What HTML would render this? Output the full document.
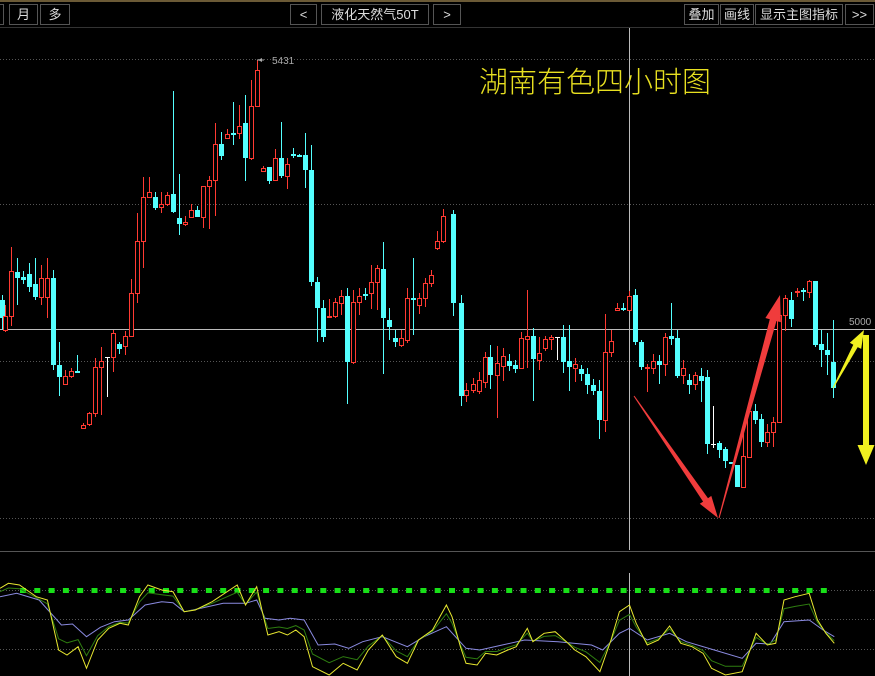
<!DOCTYPE html>
<html><head><meta charset="utf-8"><style>
html,body{margin:0;padding:0;background:#000;width:875px;height:676px;overflow:hidden}
.b{position:absolute;top:4px;height:19px;border:1px solid #555;color:#ddd;font:13px "Liberation Sans","Noto Sans CJK SC",sans-serif;line-height:19px;text-align:center;box-sizing:content-box}
</style></head><body>
<div style="position:absolute;left:0;top:0;width:875px;height:2px;background:#6b5a36"></div>
<div style="position:absolute;left:0;top:27px;width:875px;height:1px;background:#333"></div>
<div class="b" style="left:-2px;width:4px"></div>
<div class="b" style="left:9px;width:27px">月</div>
<div class="b" style="left:40px;width:28px">多</div>
<div class="b" style="left:290px;width:25px">&lt;</div>
<div class="b" style="left:321px;width:106px">液化天然气50T</div>
<div class="b" style="left:433px;width:26px">&gt;</div>
<div class="b" style="left:684px;width:33px">叠加</div>
<div class="b" style="left:720px;width:32px">画线</div>
<div class="b" style="left:755px;width:86px">显示主图指标</div>
<div class="b" style="left:845px;width:27px">&gt;&gt;</div>
<svg id="s" width="875" height="676" style="position:absolute;left:0;top:0">
<g stroke="#555" stroke-dasharray="1,2" stroke-width="1">
<line x1="0" y1="59.5" x2="875" y2="59.5"/><line x1="0" y1="204.5" x2="875" y2="204.5"/>
<line x1="0" y1="361.5" x2="875" y2="361.5"/><line x1="0" y1="518.5" x2="875" y2="518.5"/>
<line x1="0" y1="590.5" x2="875" y2="590.5"/><line x1="0" y1="619.5" x2="875" y2="619.5"/>
<line x1="0" y1="649.5" x2="875" y2="649.5"/>
</g>
<line x1="0" y1="551.5" x2="875" y2="551.5" stroke="#555"/>
<line x1="0" y1="329.5" x2="875" y2="329.5" stroke="#bbb"/>
<line x1="629.5" y1="28" x2="629.5" y2="550" stroke="#bbb"/>
<line x1="629.5" y1="573" x2="629.5" y2="676" stroke="#bbb"/>
<g id="c"></g>
<g id="ind"></g>
<polyline points="257,60 264,60" stroke="#aaa" fill="none"/><polygon points="258,60 262,58 262,62" fill="#aaa"/>
<text x="272" y="64" fill="#aaa" font-family="Liberation Sans" font-size="10">5431</text>
<text x="849" y="325" fill="#aaa" font-family="Liberation Sans" font-size="10">5000</text>
<text x="479" y="92" fill="#e8e020" font-family="Noto Sans CJK SC,sans-serif" font-size="29" font-weight="300">湖南有色四小时图</text>
<g id="arr"></g>
</svg>
<script>
var d=[[2,'c',300,318,295,330],[5,'r',316,330,305,332],[11,'r',271,316,247,326],[17,'c',272,278,258,305],[23,'c',277,280,271,284],[29,'c',274,287,263,292],[35,'c',284,297,258,300],[41,'r',278,297,265,305],[47,'r',278,297,258,318],[53,'c',278,365,270,370],[59,'c',365,377,342,396],[65,'r',376,384,370,384],[71,'r',371,376,368,378],[77,'c',371,373,355,373],[83,'r',425,428,423,429],[89,'r',413,424,412,426],[95,'r',367,413,358,417],[101,'r',361,367,347,415],[107,'w',357,358,357,397],[113,'r',333,357,330,372],[119,'c',344,349,342,354],[125,'r',336,346,331,355],[131,'r',293,336,279,337],[137,'r',241,293,213,303],[143,'r',197,241,177,268],[149,'r',192,197,177,192],[155,'c',197,208,192,210],[161,'r',204,207,192,213],[167,'r',195,204,192,206],[173,'c',194,212,91,213],[179,'c',218,224,174,235],[185,'r',222,224,216,226],[191,'r',210,217,204,217],[197,'c',210,217,206,217],[203,'r',186,217,186,228],[209,'r',180,186,176,229],[215,'r',144,180,123,216],[221,'c',144,156,132,160],[227,'r',134,138,129,138],[233,'c',133,134,102,145],[239,'r',126,133,105,139],[245,'c',123,158,95,181],[251,'r',106,158,80,160],[257,'r',70,106,60,106],[263,'r',168,171,166,172],[269,'c',167,181,168,184],[275,'r',158,180,149,181],[281,'c',158,176,122,178],[287,'r',164,176,158,189],[293,'c',154,155,148,158],[299,'c',155,156,154,157],[305,'c',155,170,133,188],[311,'c',170,282,145,286],[317,'c',282,308,277,342],[323,'c',308,337,300,342],[329,'r',316,317,299,318],[335,'r',302,316,298,318],[341,'r',296,303,290,315],[347,'c',296,362,288,404],[353,'r',302,362,290,364],[359,'r',296,302,288,315],[365,'c',294,296,288,300],[371,'r',282,293,265,309],[377,'r',268,282,265,310],[383,'c',269,318,242,374],[389,'c',320,327,308,340],[395,'c',338,342,330,347],[401,'r',338,345,330,347],[407,'r',298,340,288,343],[413,'c',298,300,258,335],[419,'r',298,305,293,314],[425,'r',283,298,278,307],[431,'r',275,283,270,287],[437,'r',241,248,231,250],[443,'r',216,241,209,243],[453,'c',214,303,210,316],[461,'c',303,396,295,406],[466,'r',390,395,383,402],[473,'r',384,390,378,393],[479,'r',380,391,372,394],[485,'r',357,382,352,388],[490,'c',357,375,345,389],[497,'r',363,375,346,418],[503,'r',356,366,348,381],[509,'c',361,366,354,371],[515,'c',365,369,360,373],[521,'r',338,368,332,369],[527,'r',336,339,290,368],[533,'c',336,359,328,401],[539,'r',353,360,337,370],[545,'r',339,348,336,351],[551,'r',337,339,335,350],[557,'w',337,338,337,360],[563,'c',337,362,325,373],[569,'c',361,367,325,391],[575,'r',364,368,358,382],[581,'c',369,374,365,381],[587,'c',374,385,368,394],[593,'c',385,391,379,395],[599,'c',391,420,380,439],[605,'r',352,420,314,432],[611,'r',341,352,330,357],[617,'r',308,310,303,311],[623,'c',308,310,303,311],[629,'r',296,310,291,311],[635,'c',295,342,289,345],[641,'c',342,367,340,370],[647,'r',367,368,364,392],[653,'r',361,368,354,374],[659,'c',361,365,355,384],[665,'r',337,364,333,376],[671,'c',336,339,303,345],[677,'c',338,376,330,378],[683,'r',368,375,360,384],[689,'c',380,385,374,394],[695,'r',375,384,372,390],[701,'c',376,381,368,402],[707,'c',377,444,370,454],[713,'w',444,445,406,448],[719,'c',443,450,441,458],[725,'c',449,461,447,468],[731,'c',462,464,462,464],[737,'c',465,487,465,487],[743,'r',456,487,430,487],[749,'r',411,457,405,457],[755,'c',411,420,404,424],[761,'c',419,442,414,447],[767,'r',432,442,424,447],[773,'r',422,432,417,447],[779,'r',315,422,299,422],[785,'r',298,315,295,331],[791,'c',300,319,292,327],[797,'r',291,292,288,297],[803,'c',290,292,288,301],[809,'r',281,292,280,298],[815,'c',281,345,281,347],[821,'c',344,350,330,367],[827,'c',350,355,333,375],[833,'c',362,388,320,398]];
var h='';
d.forEach(function(a){var x=a[0],t=a[1],o=a[2],c=a[3],hi=a[4],lo=a[5];
var col=t=='c'?'#54ffff':t=='r'?'#ff3a32':'#fff';
h+='<line x1="'+(x+.5)+'" y1="'+hi+'" x2="'+(x+.5)+'" y2="'+lo+'" stroke="'+col+'"/>';
if(t=='c')h+='<rect x="'+(x-2)+'" y="'+o+'" width="5" height="'+Math.max(2,c-o)+'" fill="'+col+'"/>';
else if(t=='r')h+='<rect x="'+(x-1.5)+'" y="'+(o+.5)+'" width="4" height="'+Math.max(1,c-o)+'" fill="#000" stroke="'+col+'"/>';
else h+='<line x1="'+(x-2)+'" y1="'+(o+.5)+'" x2="'+(x+3)+'" y2="'+(o+.5)+'" stroke="#fff"/>';});
document.getElementById('c').innerHTML=h;
function arrow(x0,y0,x1,y1,w0,w1,hl,hw,col){
var dx=x1-x0,dy=y1-y0,L=Math.sqrt(dx*dx+dy*dy),ux=dx/L,uy=dy/L,nx=-uy,ny=ux;
var bx=x1-ux*hl,by=y1-uy*hl;
var p=[[x0+nx*w0/2,y0+ny*w0/2],[bx+nx*w1/2,by+ny*w1/2],[bx+nx*hw/2,by+ny*hw/2],[x1,y1],[bx-nx*hw/2,by-ny*hw/2],[bx-nx*w1/2,by-ny*w1/2],[x0-nx*w0/2,y0-ny*w0/2]];
return '<polygon fill="'+col+'" points="'+p.map(function(q){return q[0].toFixed(1)+','+q[1].toFixed(1)}).join(' ')+'"/>';}
document.getElementById('arr').innerHTML=
arrow(634,396,718,518,1,6,22,14,'#f03c3c')+
arrow(719,518,780,295,1,7,26,16,'#f03c3c')+
arrow(833,388,864,330,1,5,18,13,'#f0f020')+
arrow(866,335,866,465,6,6,20,17,'#f0f020');
var Y=[0,145,15,130,35,135,65,170,85,180,105,330,120,345,140,320,155,385,175,300,195,265,215,250,230,255,250,170,265,135,290,150,310,155,330,215,350,210,380,185,425,135,440,195,460,140,470,215,480,285,500,275,515,285,530,270,545,290,560,380,590,405,615,370,640,390,660,330,685,285,710,350,730,370,750,300,775,270,800,195,810,230,825,320,835,370,855,375,870,340,890,345,910,330,925,320,945,265,955,305,975,280,995,275,1015,305,1030,330,1050,350,1075,395,1095,300,1110,215,1128,195,1140,250,1160,315,1180,300,1200,258,1220,310,1240,320,1260,340,1275,385,1300,405,1330,395,1355,280,1375,315,1390,310,1405,180,1425,170,1450,160,1465,240,1480,280,1495,310];
var P=[0,170,30,160,70,180,110,255,130,252,155,290,180,262,205,245,230,240,260,195,290,185,310,188,330,215,360,205,400,190,440,190,460,180,475,235,500,240,520,235,545,240,570,315,600,312,625,325,650,305,685,290,730,320,760,290,800,260,835,325,860,330,900,315,940,300,1000,305,1060,315,1080,330,1110,280,1128,265,1160,300,1200,280,1230,305,1280,330,1330,355,1355,310,1380,312,1405,245,1450,240,1475,270,1495,290];
function pi(x){for(var i=0;i<P.length-2;i+=2){if(x>=P[i]&&x<=P[i+2]){var f=(x-P[i])/(P[i+2]-P[i]);return P[i+1]+f*(P[i+3]-P[i+1]);}}return P[P.length-1];}
function pts(A,g){var s='';for(var i=0;i<A.length;i+=2){var x=A[i],y=A[i+1];if(g)y=0.6*y+0.4*pi(x);s+=(x/1.792).toFixed(1)+','+(540+y/3).toFixed(1)+' ';}return s;}
var q='';for(var x=20;x<825;x+=14.3)q+='<rect x="'+x.toFixed(1)+'" y="588" width="6" height="5" fill="#18e018"/>';
q+='<polyline points="'+pts(P)+'" fill="none" stroke="#8a8ae0" stroke-width="1"/>';
q+='<polyline points="'+pts(Y,1)+'" fill="none" stroke="#2e7d10" stroke-width="1"/>';
q+='<polyline points="'+pts(Y)+'" fill="none" stroke="#e8e830" stroke-width="1"/>';
document.getElementById('ind').innerHTML=q;
</script>
</body></html>
